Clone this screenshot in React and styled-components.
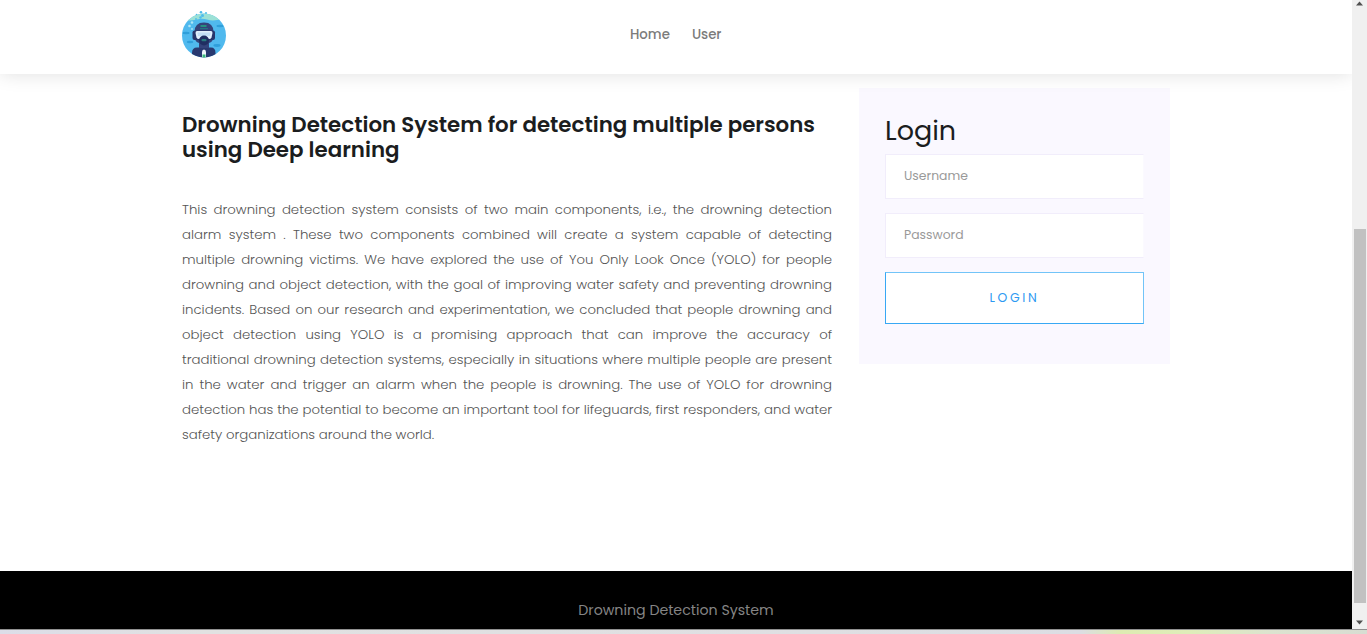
import React from "react";
import styled, { createGlobalStyle } from "styled-components";

const GlobalStyle = createGlobalStyle`
  *, *::before, *::after { box-sizing: border-box; }
  html, body { margin: 0; padding: 0; overflow: hidden; }
  body { background: #fff; font-family: Poppins, Inter, "Open Sans", sans-serif; }
  h1, h2, p { margin: 0; }
`;

const Screen = styled.div`
  display: flex;
  flex-direction: column;
  width: 1367px;
  height: 634px;
`;

const Viewport = styled.div`
  display: flex;
  height: 629px;
`;

const Page = styled.div`
  display: flex;
  flex-direction: column;
  width: 1352px;
  background: #fff;
`;

const Header = styled.header`
  position: relative;
  z-index: 2;
  display: flex;
  align-items: flex-start;
  height: 74px;
  padding: 10px 182px 0;
  background: #fff;
  box-shadow: 0 0 18px rgba(0, 0, 0, 0.13);
`;

const Logo = styled.svg`
  display: block;
  width: 45px;
  height: 49px;
`;

const Nav = styled.nav`
  display: flex;
  gap: 22px;
  margin-left: 403px;
  padding-top: 15px;
`;

const NavLink = styled.a`
  font-size: 13.3px;
  line-height: 20px;
  font-weight: 500;
  color: #7b7b7b;
`;

const Main = styled.main`
  display: flex;
  align-items: flex-start;
  height: 497px;
  padding: 14px 182px 0;
`;

const Article = styled.article`
  width: 650px;
  padding-top: 24px;
`;

const Title = styled.h1`
  font-size: 21.36px;
  line-height: 25.4px;
  font-weight: 600;
  color: #1b1d1e;
`;

const TitleLine = styled.span`
  display: block;
  white-space: nowrap;
`;

const Copy = styled.p`
  margin-top: 35.2px;
  font-size: 13.3px;
  line-height: 24.95px;
  font-weight: 300;
  color: #555;
`;

const CopyLine = styled.span`
  display: block;
  white-space: nowrap;
  text-align-last: justify;
  &:last-child { text-align-last: left; }
`;

const LoginPanel = styled.form`
  display: flex;
  flex-direction: column;
  width: 311px;
  height: 276px;
  margin-left: 27px;
  padding: 26px 26px 0;
  background: #faf8ff;
`;

const PanelTitle = styled.h2`
  height: 40px;
  font-size: 27px;
  line-height: 34px;
  font-weight: 400;
  color: #1b1d1e;
`;

const Field = styled.input`
  width: 259px;
  height: 45px;
  margin-bottom: 14px;
  padding: 0 18px 2px;
  border: 1px solid #f1edfb;
  border-right-color: #fbfaff;
  border-radius: 0;
  background: #fff;
  font: 400 12.4px Poppins, Inter, sans-serif;
  &::placeholder { color: #999; opacity: 1; }
`;

const Submit = styled.button`
  width: 259px;
  height: 52px;
  padding: 0 0 1px 0;
  border: 1px solid #38a8f4;
  border-top-color: #72c4f8;
  border-right-color: #72c4f8;
  background: #fff;
  font: 400 12.4px Poppins, Inter, sans-serif;
  letter-spacing: 2.66px;
  color: #2c99f2;
`;

const Footer = styled.footer`
  height: 58px;
  padding-top: 26px;
  background: #000;
  text-align: center;
  font-size: 14.2px;
  line-height: 26px;
  color: #858585;
`;

const ScrollTrack = styled.div`
  position: relative;
  z-index: 3;
  display: flex;
  flex-direction: column;
  align-items: center;
  width: 15px;
  background: #f0f0f0;
`;

const Arrow = styled.svg`
  display: block;
  width: 9px;
  height: 5px;
  margin-top: ${(p) => p.$top};
`;

const Thumb = styled.div`
  width: 12px;
  height: 374px;
  margin-top: 223px;
  background: #c1c1c1;
`;

const DesktopEdge = styled.div`
  height: 5px;
  border-top: 1px solid #909090;
  background: linear-gradient(90deg, #dcdde8 0, #e1e1e1 15%, #dfdfe2 60%, #dcdde3 79%, #deebb2 82%, #dfedb9 87%, #dce3cf 93%, #d8ddd2 100%);
`;

const titleLines = [
  "Drowning Detection System for detecting multiple persons",
  "using Deep learning",
];

const copyLines = [
  "This drowning detection system consists of two main components, i.e., the drowning detection",
  "alarm system . These two components combined will create a system capable of detecting",
  "multiple drowning victims. We have explored the use of You Only Look Once (YOLO) for people",
  "drowning and object detection, with the goal of improving water safety and preventing drowning",
  "incidents. Based on our research and experimentation, we concluded that people drowning and",
  "object detection using YOLO is a promising approach that can improve the accuracy of",
  "traditional drowning detection systems, especially in situations where multiple people are present",
  "in the water and trigger an alarm when the people is drowning. The use of YOLO for drowning",
  "detection has the potential to become an important tool for lifeguards, first responders, and water",
  "safety organizations around the world.",
];

function DiverLogo() {
  return (
    <Logo viewBox="0 0 45 49" aria-label="Diver">
      <defs>
        <clipPath id="disc"><circle cx="22" cy="25.500" r="22" /></clipPath>
      </defs>
      <g clipPath="url(#disc)">
        <rect width="45" height="49" fill="#50b9ee" />
        <path d="M0 0h45v10q-5-1-10 0t-10-.5-10 0-15 1z" fill="#9ce1d6" />
        <g fill="#2f9fdb">
          <ellipse cx="38" cy="16" rx="3.6" ry="1.200" />
          <ellipse cx="4" cy="23" rx="3.6" ry="1.200" />
          <ellipse cx="8" cy="32" rx="3.2" ry="1.200" />
          <ellipse cx="35" cy="35.500" rx="3.600" ry="1.400" />
        </g>
        <path d="M10 49v-6q0-5.500 5-5.500h14q4.500 0 4.500 5.500v6z" fill="#293970" />
        <path d="M12.500 29V22q0-9.500 9.500-9.500t9.500 9.500v7q-1.500 3-4.500 4v5H17v-5q-3-1-4.500-4z" fill="#34437b" />
        <path d="M18.500 16h6" fill="none" stroke="#22a982" strokeWidth="1.500" />
        <path d="M18 18.700h8" fill="none" stroke="#237f83" strokeWidth="1" />
        <rect x="10.500" y="20.500" width="22.500" height="9.500" rx="2" fill="#27356b" />
        <path d="M15 21h14q1.500 0 1.500 2l-1 4.500q-.5 1.500-2.500 1.500H17q-2 0-2.500-1.500l-1-4.500q0-2 1.500-2z" fill="#e2effc" />
        <path d="M15.500 22.500h13l-.5 3.500H16z" fill="#c3def6" />
        <circle cx="22" cy="30.500" r="5" fill="#202e62" />
        <rect x="19.500" y="29" width="5" height="2.200" rx="1" fill="#287c80" />
        <path d="M20 42q0-2.500 2-2.500t2 2.500v7h-4z" fill="#edf5fb" />
        <path d="M20.500 44.500h3v4h-3z" fill="#37b979" />
      </g>
      <g fill="#4dbcec">
        <circle cx="19" cy="2.300" r="1.300" /><circle cx="24" cy="3" r="1" />
        <circle cx="20.500" cy="5.500" r="1.500" /><circle cx="14.500" cy="4.500" r="0.800" />
        <circle cx="18.500" cy="7.500" r="1.200" /><circle cx="14" cy="9" r="0.900" />
      </g>
      <g fill="#aee5f6">
        <circle cx="10" cy="12.500" r="1.300" /><circle cx="7.500" cy="16" r="1.300" /><circle cx="10" cy="19" r="0.900" />
      </g>
    </Logo>
  );
}

export default function App() {
  return (
    <Screen>
      <GlobalStyle />
      <Viewport>
        <Page>
          <Header>
            <DiverLogo />
            <Nav>
              <NavLink>Home</NavLink>
              <NavLink>User</NavLink>
            </Nav>
          </Header>
          <Main>
            <Article>
              <Title>
                {titleLines.map((line) => <TitleLine key={line}>{line}</TitleLine>)}
              </Title>
              <Copy>
                {copyLines.map((line) => <CopyLine key={line}>{line}</CopyLine>)}
              </Copy>
            </Article>
            <LoginPanel>
              <PanelTitle>Login</PanelTitle>
              <Field placeholder="Username" />
              <Field type="password" placeholder="Password" />
              <Submit type="button">LOGIN</Submit>
            </LoginPanel>
          </Main>
          <Footer>Drowning Detection System</Footer>
        </Page>
        <ScrollTrack>
          <Arrow $top="1px" viewBox="0 0 9 5"><path d="M1 4.500 4.500 0.500 8 4.500z" fill="#505050" /></Arrow>
          <Thumb />
          <Arrow $top="17px" viewBox="0 0 9 5"><path d="M1 0.500 4.500 4.500 8 0.500z" fill="#505050" /></Arrow>
        </ScrollTrack>
      </Viewport>
      <DesktopEdge />
    </Screen>
  );
}
